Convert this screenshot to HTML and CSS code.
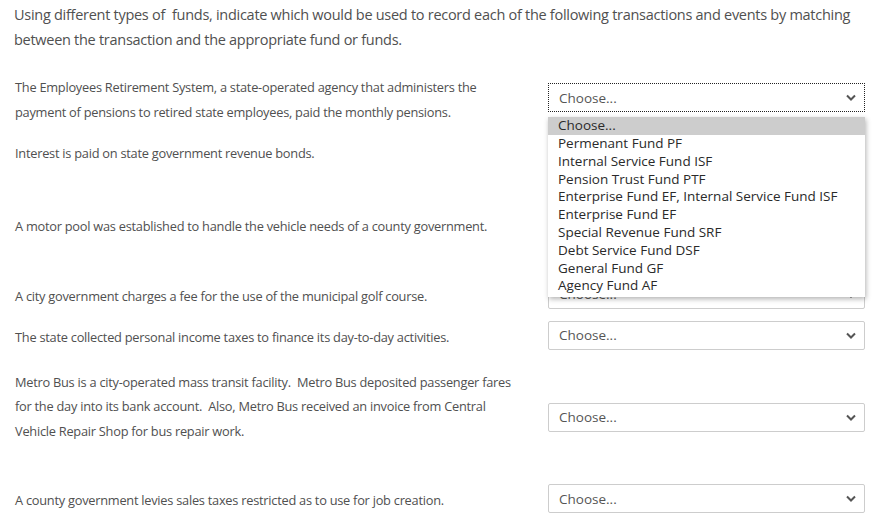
FILE: index.html
```html
<!DOCTYPE html>
<html lang="en">
<head>
  <meta charset="UTF-8" />
  <title>Matching question</title>
  <link rel="stylesheet" href="styles.css">
</head>
<body>
  <div class="question">
    <p class="intro">Using different types of &nbsp;funds, indicate which would be used to record each of the following transactions and events by matching<br>between the transaction and the appropriate fund or funds.</p>

    <div class="answers">
      <div class="row tight">
        <div class="text">The Employees Retirement System, a state-operated agency that administers the<br>payment of pensions to retired state employees, paid the monthly pensions.</div>
        <div class="control">
          <select class="choice is-open">
            <option>Choose...</option>
          </select>
          <span class="chevron"><svg width="10" height="7" viewBox="0 0 10 7"><path d="M1 1.5 L5 5.5 L9 1.5" fill="none" stroke="#555" stroke-width="2"/></svg></span>
          <ul class="menu">
            <li class="active">Choose...</li>
            <li>Permenant Fund PF</li>
            <li>Internal Service Fund ISF</li>
            <li>Pension Trust Fund PTF</li>
            <li>Enterprise Fund EF, Internal Service Fund ISF</li>
            <li>Enterprise Fund EF</li>
            <li>Special Revenue Fund SRF</li>
            <li>Debt Service Fund DSF</li>
            <li>General Fund GF</li>
            <li>Agency Fund AF</li>
          </ul>
        </div>
      </div>

      <div class="row loose">
        <div class="text">Interest is paid on state government revenue bonds.<br>&nbsp;</div>
        <div class="control">
          <select class="choice"><option>Choose...</option></select>
          <span class="chevron"><svg width="10" height="7" viewBox="0 0 10 7"><path d="M1 1.5 L5 5.5 L9 1.5" fill="none" stroke="#555" stroke-width="2"/></svg></span>
        </div>
      </div>

      <div class="row">
        <div class="text">A motor pool was established to handle the vehicle needs of a county government.<br>&nbsp;</div>
        <div class="control">
          <select class="choice"><option>Choose...</option></select>
          <span class="chevron"><svg width="10" height="7" viewBox="0 0 10 7"><path d="M1 1.5 L5 5.5 L9 1.5" fill="none" stroke="#555" stroke-width="2"/></svg></span>
        </div>
      </div>

      <div class="row tight">
        <div class="text">A city government charges a fee for the use of the municipal golf course.</div>
        <div class="control">
          <select class="choice"><option>Choose...</option></select>
          <span class="chevron"><svg width="10" height="7" viewBox="0 0 10 7"><path d="M1 1.5 L5 5.5 L9 1.5" fill="none" stroke="#555" stroke-width="2"/></svg></span>
        </div>
      </div>

      <div class="row">
        <div class="text">The state collected personal income taxes to finance its day-to-day activities.</div>
        <div class="control">
          <select class="choice"><option>Choose...</option></select>
          <span class="chevron"><svg width="10" height="7" viewBox="0 0 10 7"><path d="M1 1.5 L5 5.5 L9 1.5" fill="none" stroke="#555" stroke-width="2"/></svg></span>
        </div>
      </div>

      <div class="row">
        <div class="text">Metro Bus is a city-operated mass transit facility. &nbsp;Metro Bus deposited passenger fares<br>for the day into its bank account. &nbsp;Also, Metro Bus received an invoice from Central<br>Vehicle Repair Shop for bus repair work.<br>&nbsp;</div>
        <div class="control">
          <select class="choice"><option>Choose...</option></select>
          <span class="chevron"><svg width="10" height="7" viewBox="0 0 10 7"><path d="M1 1.5 L5 5.5 L9 1.5" fill="none" stroke="#555" stroke-width="2"/></svg></span>
        </div>
      </div>

      <div class="row">
        <div class="text">A county government levies sales taxes restricted as to use for job creation.</div>
        <div class="control">
          <select class="choice"><option>Choose...</option></select>
          <span class="chevron"><svg width="10" height="7" viewBox="0 0 10 7"><path d="M1 1.5 L5 5.5 L9 1.5" fill="none" stroke="#555" stroke-width="2"/></svg></span>
        </div>
      </div>
    </div>
  </div>
</body>
</html>
```

FILE: styles.css
```css
body {
  margin: 0;
  padding: 1.5px 14px 0;
  font-family: 'Open Sans', 'Noto Sans', sans-serif;
  color: #505050;
  background-color: #ffffff;
}
.intro {
  margin: 0 0 23.5px;
  font-size: 14.5px;
  line-height: 25px;
  letter-spacing: -0.28px;
  white-space: nowrap;
}
.row {
  display: flex;
  align-items: center;
  margin-bottom: 20px;
}
.row.tight {
  margin-bottom: 16.5px;
}
.row.loose {
  margin-bottom: 24px;
}
.text {
  flex: 0 0 533px;
  padding-left: 1px;
  font-size: 12.8px;
  line-height: 24.7px;
  letter-spacing: -0.25px;
  white-space: nowrap;
}
.control {
  position: relative;
  width: 317px;
  height: 21px;
}
.choice {
  -webkit-appearance: none;
  appearance: none;
  display: block;
  width: 100%;
  height: 29px;
  margin: -6px 0 -2px;
  padding: 0 10px;
  border: 1px solid #cdcdcd;
  border-radius: 2px;
  background-color: #ffffff;
  font-family: inherit;
  font-size: 13.5px;
  color: #555;
}
.choice.is-open {
  border: 1px dotted #222;
  border-radius: 0;
}
.chevron {
  position: absolute;
  right: 9px;
  top: 5px;
  line-height: 0;
  pointer-events: none;
}
.menu {
  position: absolute;
  top: 28px;
  left: 0;
  width: 317px;
  margin: 0;
  padding: 0 0 2px;
  list-style: none;
  background-color: #ffffff;
  box-shadow: 1px 2px 5px rgba(0,0,0,0.3);
  z-index: 10;
}
.menu li {
  padding-left: 10px;
  font-size: 13.5px;
  line-height: 17.8px;
  color: #2a2a2a;
}
.menu li.active {
  background-color: #cdcdcd;
}
```
